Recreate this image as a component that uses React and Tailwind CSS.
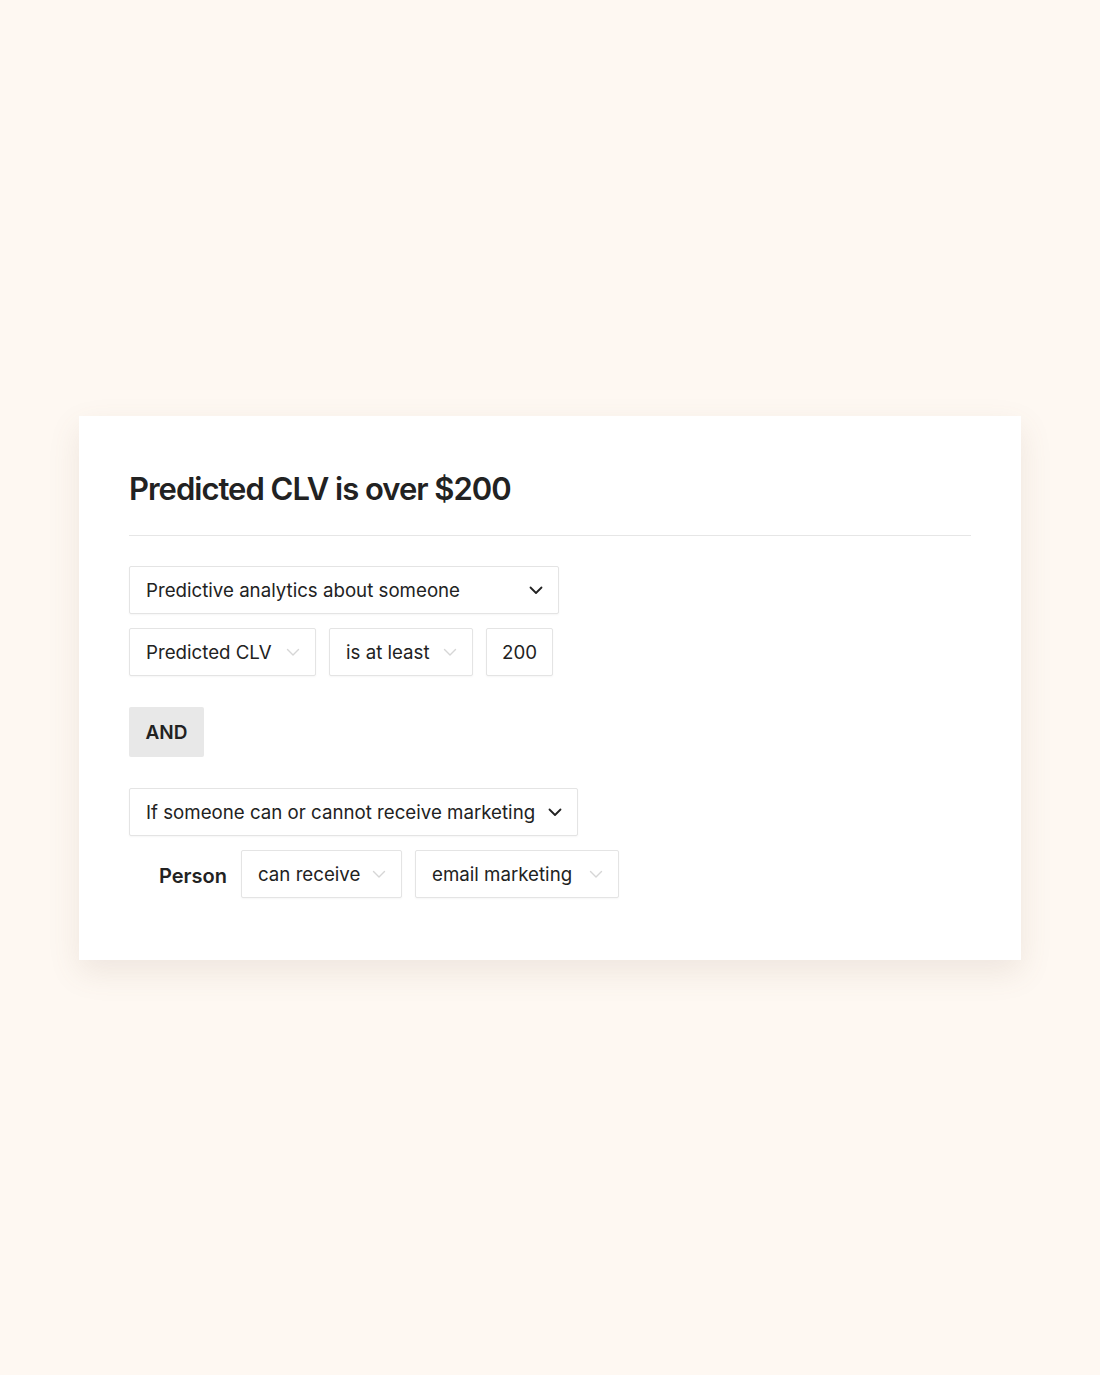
import React from "react";

const Chevron = ({ light }) => (
  <svg width="16" height="16" viewBox="0 0 16 16" fill="none">
    <path
      d="M2.5 5.5 L8 11 L13.5 5.5"
      stroke={light ? "#d6d6d6" : "#222222"}
      strokeWidth={light ? "1.4" : "1.8"}
      strokeLinecap="round"
      strokeLinejoin="round"
    />
  </svg>
);

const Box = ({ children, className = "" }) => (
  <div
    className={
      "flex items-center h-[48px] bg-white border border-[#e4e4e4] rounded-[2px] shadow-[0_1px_2px_rgba(0,0,0,0.04)] " +
      className
    }
  >
    {children}
  </div>
);

export default function App() {
  return (
    <div
      className="min-h-[1375px] w-full bg-[#fef8f2] pt-[416px] pl-[79px] text-[#222222]"
      style={{ fontFamily: "Inter, 'Noto Sans', sans-serif" }}
    >
      <div className="w-[942px] h-[544px] bg-white shadow-[0_12px_30px_rgba(120,100,80,0.12)] px-[50px] pt-[52px]">
        <h1 className="text-[31px] leading-[42px] font-semibold tracking-[-1px] text-[#222]">
          Predicted CLV is over $200
        </h1>
        <div className="mt-[25px] h-px bg-[#e6e6e6]" />
        <div className="mt-[30px] flex flex-col gap-[14px] text-[18.7px]">
          <Box className="w-[430px] pl-[16px] pr-[14px] justify-between">
            <span className="pt-[3px]">Predictive analytics about someone</span>
            <Chevron />
          </Box>
          <div className="flex gap-[13px]">
            <Box className="w-[187px] pl-[16px] pr-[14px] justify-between">
              <span className="pt-[3px]">Predicted CLV</span>
              <Chevron light />
            </Box>
            <Box className="w-[144px] pl-[16px] pr-[14px] justify-between">
              <span className="pt-[3px]">is at least</span>
              <Chevron light />
            </Box>
            <Box className="w-[67px] justify-center">
              <span className="pt-[3px]">200</span>
            </Box>
          </div>
        </div>
        <div className="mt-[31px] w-[75px] h-[50px] bg-[#e8e8e8] rounded-[2px] flex items-center justify-center">
          <span className="text-[19px] font-semibold pt-[3px]">AND</span>
        </div>
        <div className="mt-[31px] flex flex-col gap-[14px] text-[18.7px]">
          <Box className="w-[449px] pl-[16px] pr-[14px] justify-between">
            <span className="pt-[3px]">If someone can or cannot receive marketing</span>
            <Chevron />
          </Box>
          <div className="flex items-center pl-[30px]">
            <span className="text-[20px] font-semibold w-[82px] pt-[3px]">Person</span>
            <Box className="w-[161px] pl-[16px] pr-[14px] justify-between">
              <span className="pt-[3px]">can receive</span>
              <Chevron light />
            </Box>
            <Box className="ml-[13px] w-[204px] pl-[16px] pr-[14px] justify-between">
              <span className="pt-[3px]">email marketing</span>
              <Chevron light />
            </Box>
          </div>
        </div>
      </div>
    </div>
  );
}
